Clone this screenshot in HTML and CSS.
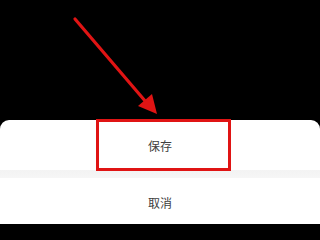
FILE: index.html
```html
<!DOCTYPE html>
<html>
<head>
<meta charset="utf-8">
<link rel="stylesheet" href="styles.css">
</head>
<body>
<div class="screen">
  <div class="backdrop"></div>
  <div class="sheet">
    <div class="row row-save">保存</div>
    <div class="divider"></div>
    <div class="row row-cancel">取消</div>
    <div class="highlight"></div>
  </div>
  <svg class="arrow" width="320" height="224" viewBox="0 0 320 224">
    <line x1="75" y1="19" x2="146" y2="102" stroke="#e01414" stroke-width="3.2" stroke-linecap="round"/>
    <polygon points="157,114 152,94 138,106" fill="#e01414"/>
  </svg>
</div>
</body>
</html>
```
FILE: styles.css
```css
html, body {
  margin: 0;
  padding: 0;
  background: #000;
}
.screen {
  position: relative;
  width: 320px;
  height: 224px;
  overflow: hidden;
  display: flex;
  flex-direction: column;
  font-family: "Noto Sans CJK SC", "Noto Sans", sans-serif;
}
.backdrop {
  height: 120px;
  flex: none;
  background: #000;
}
.sheet {
  position: relative;
  flex: 1;
  background: #fff;
  border-radius: 9px 9px 0 0;
  display: flex;
  flex-direction: column;
}
.row {
  display: flex;
  align-items: center;
  justify-content: center;
  font-size: 12px;
  color: #404040;
}
.row-save {
  height: 49px;
  padding-top: 1px;
}
.divider {
  height: 8px;
  background: linear-gradient(#f3f3f3, #f6f6f6);
}
.row-cancel {
  height: 49px;
}
.highlight {
  position: absolute;
  left: 96px;
  top: -1px;
  width: 129px;
  height: 46px;
  border: 3px solid #e01414;
}
.arrow {
  position: absolute;
  left: 0;
  top: 0;
}
```
